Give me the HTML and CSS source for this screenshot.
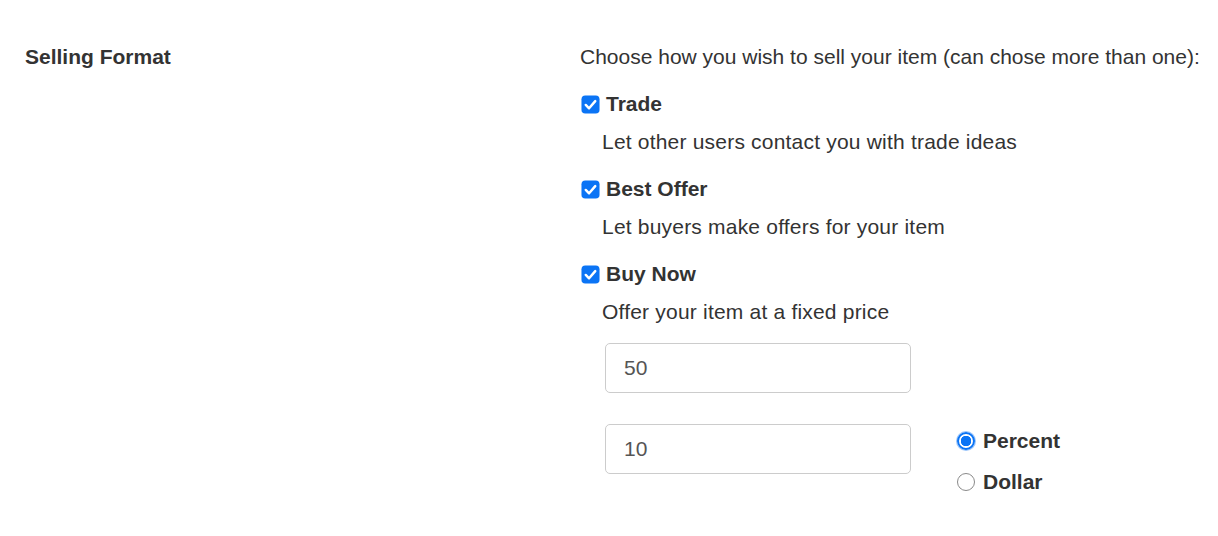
FILE: index.html
```html
<!DOCTYPE html>
<html>
<head>
<meta charset="utf-8">
<link rel="stylesheet" href="styles.css">
</head>
<body>
<div class="row">
  <div class="label">Selling Format</div>
  <div class="content">
    <p class="intro">Choose how you wish to sell your item (can chose more than one):</p>
    <div class="option">
      <div class="check-line"><span class="cb"><svg viewBox="0 0 20 20" width="19" height="19"><rect x="0.5" y="0.5" width="19" height="19" rx="4" fill="#0b74f5"/><path d="M5 10.5 L8.5 14 L15 6.5" fill="none" stroke="#fff" stroke-width="2.6" stroke-linecap="round" stroke-linejoin="round"/></svg></span><span class="opt-title">Trade</span></div>
      <div class="desc">Let other users contact you with trade ideas</div>
    </div>
    <div class="option">
      <div class="check-line"><span class="cb"><svg viewBox="0 0 20 20" width="19" height="19"><rect x="0.5" y="0.5" width="19" height="19" rx="4" fill="#0b74f5"/><path d="M5 10.5 L8.5 14 L15 6.5" fill="none" stroke="#fff" stroke-width="2.6" stroke-linecap="round" stroke-linejoin="round"/></svg></span><span class="opt-title">Best Offer</span></div>
      <div class="desc">Let buyers make offers for your item</div>
    </div>
    <div class="option">
      <div class="check-line"><span class="cb"><svg viewBox="0 0 20 20" width="19" height="19"><rect x="0.5" y="0.5" width="19" height="19" rx="4" fill="#0b74f5"/><path d="M5 10.5 L8.5 14 L15 6.5" fill="none" stroke="#fff" stroke-width="2.6" stroke-linecap="round" stroke-linejoin="round"/></svg></span><span class="opt-title">Buy Now</span></div>
      <div class="desc">Offer your item at a fixed price</div>
      <div class="fields">
        <div class="field-row"><div class="input">50</div></div>
        <div class="field-row">
          <div class="input">10</div>
          <div class="radios">
            <div class="radio-line"><span class="radio on"></span><span class="opt-title">Percent</span></div>
            <div class="radio-line"><span class="radio"></span><span class="opt-title">Dollar</span></div>
          </div>
        </div>
      </div>
    </div>
  </div>
</div>
</body>
</html>
```

FILE: styles.css
```css
html, body {
  margin: 0;
  background: #fff;
}
body {
  font-family: "Liberation Sans", Arial, Helvetica, sans-serif;
  font-size: 21px;
  color: #333;
}
.row {
  display: flex;
  padding: 45px 0 0 25px;
}
.label {
  width: 555px;
  font-weight: bold;
  line-height: 24px;
}
.content {
  flex: 1;
}
.intro {
  margin: 0;
  line-height: 24px;
}
.option {
  margin-top: 23px;
}
.check-line {
  display: flex;
  align-items: center;
  height: 24px;
}
.cb {
  display: inline-flex;
  width: 19px;
  height: 19px;
  margin: 0 6px 0 1px;
}
.opt-title {
  font-weight: bold;
}
.desc {
  margin: 14px 0 0 22px;
  line-height: 24px;
  letter-spacing: 0.2px;
}
.fields {
  margin: 19px 0 0 25px;
}
.field-row {
  display: flex;
  align-items: flex-start;
  margin-bottom: 31px;
}
.input {
  box-sizing: border-box;
  width: 306px;
  height: 50px;
  border: 1px solid #ccc;
  border-radius: 5px;
  padding: 0 18px;
  display: flex;
  align-items: center;
  color: #555;
}
.radios {
  margin: 5px 0 0 46px;
}
.radio-line {
  display: flex;
  align-items: center;
  height: 24px;
  margin-bottom: 17px;
}
.radio {
  box-sizing: border-box;
  width: 18px;
  height: 18px;
  border-radius: 50%;
  border: 1px solid #8a8a8a;
  margin-right: 8px;
  background: #fff;
}
.radio.on {
  border: 2px solid #0b74f5;
  box-shadow: 0 0 0 1px #9cc6fb;
  background: radial-gradient(circle, #0b74f5 0 5px, #fff 5.5px);
}
```
